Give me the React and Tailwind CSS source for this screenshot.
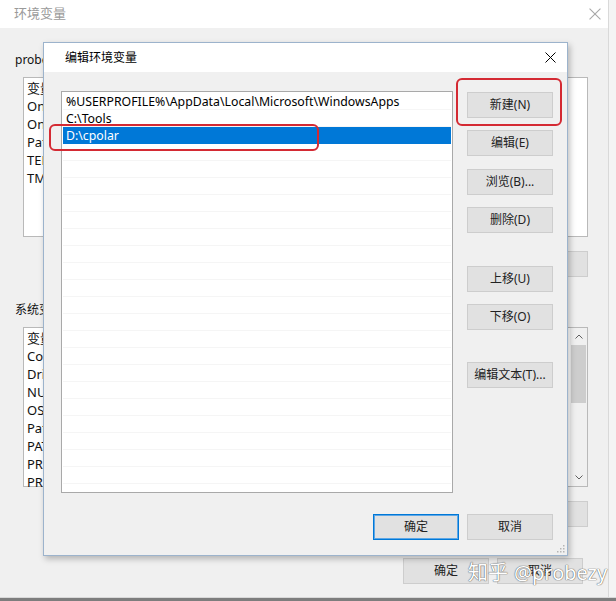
const PATHS = [
  '%USERPROFILE%\\AppData\\Local\\Microsoft\\WindowsApps',
  'C:\\Tools',
  'D:\\cpolar',
]

const USER_VARS = ['变量', 'OneDrive', 'OneDriveConsumer', 'Path', 'TEMP', 'TMP']
const SYS_VARS = ['变量', 'ComSpec', 'DriverData', 'NUMBER_OF_PROCESSORS', 'OS', 'Path', 'PATHEXT', 'PROCESSOR_ARCHITECTURE', 'PROCESSOR_IDENTIFIER']

const font = 'font-["Noto_Sans","Noto_Sans_CJK_SC",sans-serif]'

function CloseX({ color = '#000', size = 11 }) {
  return (
    <svg width={size} height={size} viewBox="0 0 11 11">
      <path d="M0.5 0.5 L10.5 10.5 M10.5 0.5 L0.5 10.5" stroke={color} strokeWidth="1" fill="none" />
    </svg>
  )
}

function Btn({ children, primary, className = '' }) {
  return (
    <div
      className={`h-[26px] w-[86px] flex items-center justify-center bg-[#e1e1e1] text-[12px] text-[#222] ${
        primary ? 'border border-[#0078d7] shadow-[inset_0_0_0_1px_#5ea7e6]' : 'border border-[#cdcdcd]'
      } ${className}`}
    >
      {children}
    </div>
  )
}

function Grip() {
  return (
    <svg width="10" height="10" viewBox="0 0 10 10">
      {[[8, 2], [8, 5], [5, 5], [8, 8], [5, 8], [2, 8]].map(([x, y]) => (
        <rect key={`${x}-${y}`} x={x} y={y} width="1.5" height="1.5" fill="#b5b5b5" />
      ))}
    </svg>
  )
}

export default function App() {
  return (
    <div className={`relative w-[616px] h-[601px] overflow-hidden bg-[#f0f0f0] ${font}`}>
      <div className="flex h-[597px]">
        {/* background window: 环境变量 */}
        <div className="w-[609px] h-full flex flex-col border-r border-[#d9d9d9]">
          <div className="h-[28px] bg-white flex items-center justify-between pl-[14px] pr-[7px]">
            <span className="text-[13px] text-[#9a9a9a]">环境变量</span>
            <CloseX color="#a8a8a8" size={12} />
          </div>
          <div className="flex-1 flex flex-col pt-[23px] pl-[15px] pr-[20px] text-[12px] text-[#111]">
            <div className="h-[18px] leading-[18px]">probezy 的用户变量(U)</div>
            <div className="mt-[8px] ml-[8px] h-[160px] bg-white border border-[#b9b9b9] pt-[1px] pl-[3px]">
              {USER_VARS.map(v => (
                <div key={v} className="h-[18px] leading-[18px] text-[13px]">{v}</div>
              ))}
            </div>
            <div className="mt-[14px] flex justify-end gap-[8px]">
              <Btn>新建(N)...</Btn>
              <Btn>编辑(E)...</Btn>
              <Btn>删除(D)</Btn>
            </div>
            <div className="mt-[24px] h-[18px] leading-[18px]">系统变量(S)</div>
            <div className="mt-[8px] ml-[8px] h-[160px] bg-white border border-[#b9b9b9] flex">
              <div className="flex-1 pt-[1px] pl-[3px]">
                {SYS_VARS.map((v, i) => (
                  <div key={i} className="h-[18px] leading-[18px] text-[13px]">{v}</div>
                ))}
              </div>
              <div className="w-[17px] flex flex-col items-center bg-[#f0f0f0]">
                <div className="h-[17px] flex items-center justify-center">
                  <svg width="8" height="5" viewBox="0 0 8 5"><path d="M0.5 4.5 L4 1 L7.5 4.5" stroke="#606060" fill="none" /></svg>
                </div>
                <div className="w-[15px] h-[58px] bg-[#cdcdcd]" />
                <div className="flex-1" />
                <div className="h-[17px] flex items-center justify-center">
                  <svg width="8" height="5" viewBox="0 0 8 5"><path d="M0.5 0.5 L4 4 L7.5 0.5" stroke="#606060" fill="none" /></svg>
                </div>
              </div>
            </div>
            <div className="mt-[14px] flex justify-end gap-[8px]">
              <Btn>新建(W)...</Btn>
              <Btn>编辑(I)...</Btn>
              <Btn>删除(L)</Btn>
            </div>
            <div className="mt-[31px] flex justify-end gap-[8px] pr-[5px]">
              <Btn>确定</Btn>
              <Btn>取消</Btn>
            </div>
          </div>
        </div>
        <div className="flex-1 bg-[#f4f4f4]" />
      </div>
      <div className="h-[4px] border-t border-[#d8d8d8] bg-[#7d7d7d]" />

      {/* watermark */}
      <div className="absolute left-[468px] top-[557px] flex items-baseline gap-[6px] text-white text-[20px] [text-shadow:0_0_1px_#555,0_0_1px_#555]">
        <span className="font-['Noto_Sans_CJK_SC',sans-serif]">知乎</span>
        <span>@probezy</span>
      </div>

      {/* dialog: 编辑环境变量 */}
      <div className="absolute left-[43px] top-[42px] w-[525px] h-[514px] bg-[#f0f0f0] border border-[#9cb3cc] shadow-[2px_3px_6px_rgba(0,0,0,0.25)] flex flex-col">
        <div className="h-[29px] bg-white flex items-center justify-between pl-[21px] pr-[11px]">
          <span className="text-[12px] text-black">编辑环境变量</span>
          <CloseX />
        </div>
        <div className="flex-1 flex flex-col pt-[19px] pl-[17px] pr-[14px]">
          <div className="flex gap-[14px]">
            <div className="w-[392px] h-[402px] bg-white border border-[#a9a9a9] pt-[1px] px-[1px] overflow-hidden">
              {PATHS.map((p, i) => (
                <div
                  key={p}
                  className={`h-[17px] leading-[17px] pl-[3px] text-[12.3px] ${
                    i === 2 ? 'bg-[#0078d7] text-white' : 'text-black border-b border-[#f6f6f6]'
                  }`}
                >
                  {p}
                </div>
              ))}
              {Array.from({ length: 20 }).map((_, i) => (
                <div key={i} className="h-[17px] border-b border-[#f5f5f5]" />
              ))}
            </div>
            <div className="flex flex-col pt-[1px]">
              <Btn>新建(N)</Btn>
              <Btn className="mt-[12px]">编辑(E)</Btn>
              <Btn className="mt-[13px]">浏览(B)...</Btn>
              <Btn className="mt-[12px]">删除(D)</Btn>
              <Btn className="mt-[33px]">上移(U)</Btn>
              <Btn className="mt-[12px]">下移(O)</Btn>
              <Btn className="mt-[32px]">编辑文本(T)...</Btn>
            </div>
          </div>
          <div className="mt-[21px] flex justify-end gap-[8px]">
            <Btn primary>确定</Btn>
            <Btn>取消</Btn>
          </div>
        </div>
        <div className="absolute right-[2px] bottom-[2px]">
          <Grip />
        </div>

        {/* red annotations */}
        <div className="absolute left-[5px] top-[81px] w-[270px] h-[27px] border-[2.5px] border-[#d42a33] rounded-[6px]" />
        <div className="absolute left-[412px] top-[35px] w-[106px] h-[48px] border-[2.5px] border-[#d42a33] rounded-[6px]" />
      </div>
    </div>
  )
}
